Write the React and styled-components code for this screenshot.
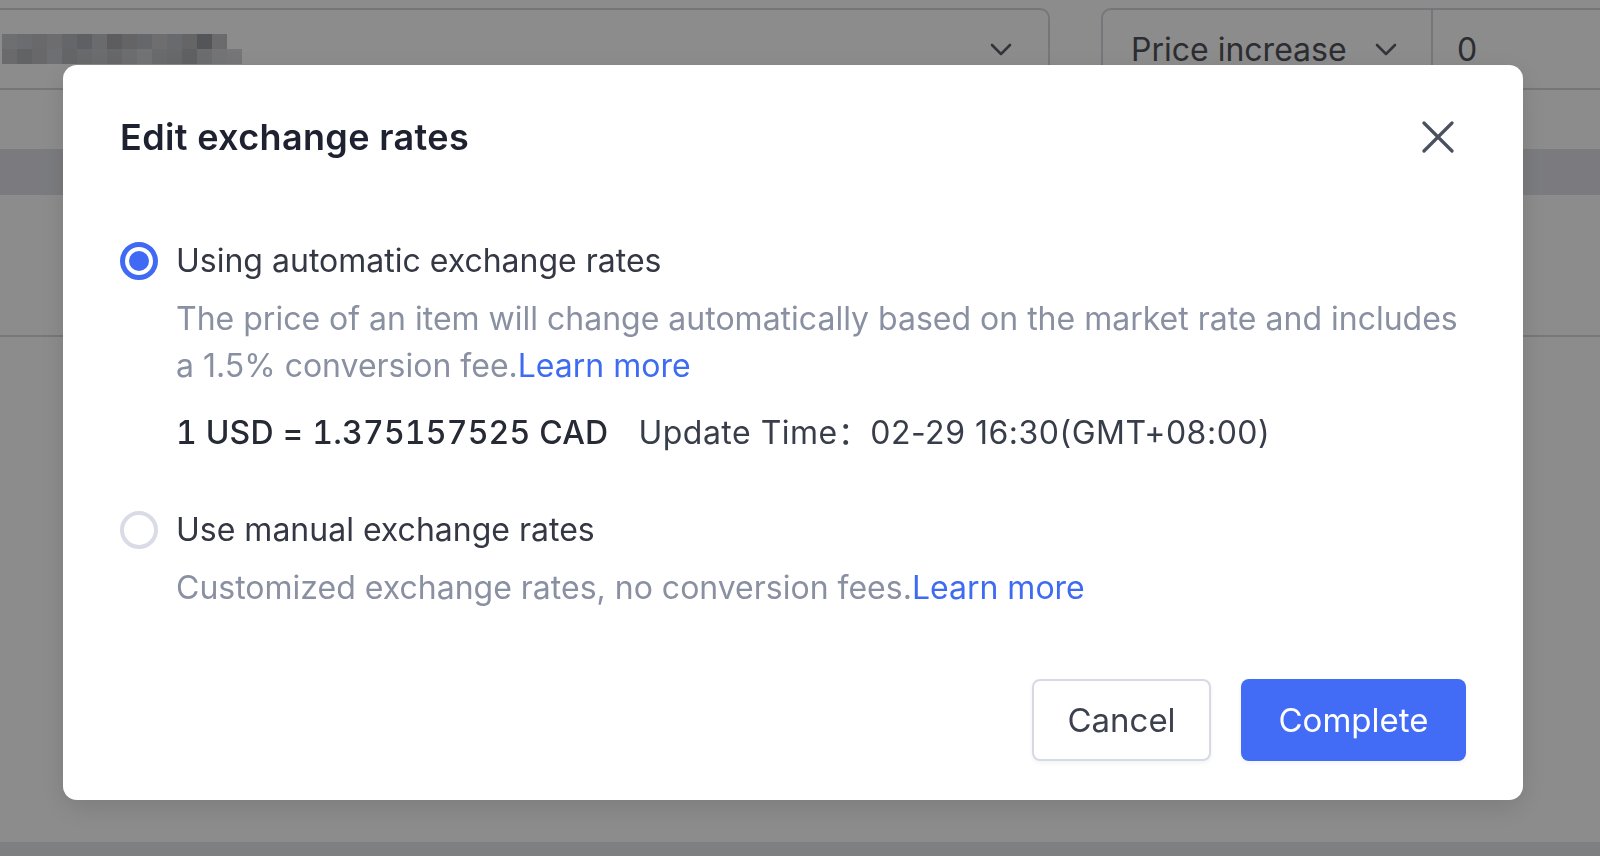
import React from 'react';
import styled, { createGlobalStyle } from 'styled-components';

const GlobalStyle = createGlobalStyle`
  html, body {
    margin: 0;
    padding: 0;
    background: #ffffff;
  }
  body {
    font-family: Inter, "Noto Sans", "Noto Sans CJK SC", sans-serif;
    overflow: hidden;
  }
  * {
    box-sizing: border-box;
  }
`;

// pixelated (censored) shop name behind the overlay
const mosaic = [
  ['#c9cace', '#c4c5ca', '#bfc0c5', '#c6c7cb', '#b9babf', '#aeafb5', '#c2c3c8', '#a9aab0', '#b6b7bc', '#bbbcc1', '#c8c9cd', '#c0c1c6', '#b8b9be', '#9a9ba1', '#c3c4c8', '#ffffff00'],
  ['#c1c2c7', '#b3b4b9', '#bdbec3', '#c9cacf', '#b8b9be', '#c0c1c6', '#c5c6ca', '#bcbdc2', '#c7c8cc', '#d1d2d6', '#c2c3c8', '#bebfc4', '#b0b1b6', '#c6c7cb', '#d3d4d8', '#d6d7db'],
];

function Chevron({ color = '#5d6068' }) {
  return (
    <svg width="22" height="13" viewBox="0 0 22 13" fill="none">
      <path d="M2 2l9 9 9-9" stroke={color} strokeWidth="2.6" strokeLinecap="round" strokeLinejoin="round" />
    </svg>
  );
}

function CloseIcon() {
  return (
    <svg width="32" height="32" viewBox="0 0 32 32" fill="none">
      <path d="M2 2l28 28M30 2L2 30" stroke="#4b505e" strokeWidth="3.2" strokeLinecap="round" />
    </svg>
  );
}

export default function App() {
  return (
    <>
      <GlobalStyle />
      <Page>
        <FilterRow>
          <SelectBox>
            <svg width="240" height="30" viewBox="0 0 240 30">
              {mosaic.map((row, r) =>
                row.map((c, i) => (
                  <rect key={`${r}-${i}`} x={i * 15} y={r * 15} width="15" height="15" fill={c} />
                ))
              )}
            </svg>
            <Chevron />
          </SelectBox>
          <PriceBox>
            <PriceType>
              Price increase
              <Chevron />
            </PriceType>
            <PriceValue>0</PriceValue>
          </PriceBox>
        </FilterRow>
        <TableHead />
        <TableRow />
        <Spacer />
        <Footer />
      </Page>

      <Overlay>
        <Modal>
          <Header>
            <Title>Edit exchange rates</Title>
            <CloseButton aria-label="Close">
              <CloseIcon />
            </CloseButton>
          </Header>

          <Body>
            <Option>
              <Radio checked />
              <Label>Using automatic exchange rates</Label>
              <Description>
                The price of an item will change automatically based on the market rate and includes
                a 1.5% conversion fee.<Link>Learn more</Link>
              </Description>
              <RateLine>
                <strong>1 USD = 1.375157525 CAD</strong>
                <span>Update Time：02-29 16:30(GMT+08:00)</span>
              </RateLine>
            </Option>

            <Option second>
              <Radio />
              <Label>Use manual exchange rates</Label>
              <Description>
                Customized exchange rates, no conversion fees.<Link>Learn more</Link>
              </Description>
            </Option>
          </Body>

          <Actions>
            <Button>Cancel</Button>
            <Button primary>Complete</Button>
          </Actions>
        </Modal>
      </Overlay>
    </>
  );
}

const Page = styled.div`
  width: 1600px;
  height: 856px;
  overflow: hidden;
  padding-top: 8px;
  display: flex;
  flex-direction: column;
  color: #4f525a;
`;

const FilterRow = styled.div`
  display: flex;
  gap: 51px;
  height: 82px;
  margin-left: -20px;
  margin-right: -40px;
`;

const SelectBox = styled.div`
  flex: 0 0 1070px;
  border: 2px solid #d6d8de;
  border-radius: 10px;
  display: flex;
  align-items: center;
  justify-content: space-between;
  padding: 0 36px 0 20px;
`;

const PriceBox = styled.div`
  flex: 1;
  display: flex;
  border: 2px solid #d6d8de;
  border-radius: 10px;
`;

const PriceType = styled.div`
  width: 330px;
  display: flex;
  align-items: center;
  gap: 28px;
  padding-left: 28px;
  border-right: 2px solid #d6d8de;
  font-size: 32px;
`;

const PriceValue = styled.div`
  display: flex;
  align-items: center;
  padding-left: 24px;
  font-size: 32px;
`;

const TableHead = styled.div`
  margin-top: 59px;
  height: 46px;
  background: #e0e1e7;
`;

const TableRow = styled.div`
  height: 142px;
  border-bottom: 2px solid #d8d9de;
`;

const Spacer = styled.div`
  flex: 1;
`;

const Footer = styled.div`
  height: 14px;
  background: #e6e7ec;
`;

const Overlay = styled.div`
  position: fixed;
  inset: 0;
  background: rgba(0, 0, 0, 0.45);
  padding: 65px 0 0 63px;
`;

const Modal = styled.div`
  width: 1460px;
  height: 735px;
  background: #ffffff;
  border-radius: 14px;
  padding: 52px 57px 39px;
  box-shadow: 0 8px 28px rgba(0, 0, 0, 0.12);
  display: flex;
  flex-direction: column;
`;

const Header = styled.div`
  display: flex;
  align-items: center;
  justify-content: space-between;
  height: 40px;
`;

const Title = styled.h2`
  margin: 0;
  font-size: 36px;
  line-height: 40px;
  font-weight: 600;
  letter-spacing: 0.35px;
  color: #1e2230;
`;

const CloseButton = styled.button`
  display: flex;
  padding: 0;
  margin-right: 12px;
  border: none;
  background: none;
  cursor: pointer;
`;

const Body = styled.div`
  margin-top: 82px;
`;

const Option = styled.div`
  display: grid;
  grid-template-columns: 38px 1fr;
  column-gap: 18px;
  align-items: center;
  margin-top: ${props => (props.second ? '53px' : '0')};
`;

const Radio = styled.span`
  width: 38px;
  height: 38px;
  border-radius: 50%;
  border: ${props => (props.checked ? '5px solid #4069f4' : '4px solid #d9dbe7')};
  display: flex;
  align-items: center;
  justify-content: center;

  &::after {
    content: '';
    width: 20px;
    height: 20px;
    border-radius: 50%;
    background: ${props => (props.checked ? '#4069f4' : 'transparent')};
  }
`;

const Label = styled.div`
  font-size: 32px;
  line-height: 44px;
  color: #343844;
`;

const Description = styled.p`
  grid-column: 2;
  margin: 12px 0 0;
  font-size: 32px;
  line-height: 47px;
  color: #8990a2;
`;

const Link = styled.a`
  color: #3f6bf2;
  cursor: pointer;
`;

const RateLine = styled.div`
  grid-column: 2;
  margin-top: 22px;
  font-size: 32px;
  line-height: 44px;
  color: #383d4a;

  strong {
    font-weight: 500;
    font-variant-numeric: tabular-nums;
    letter-spacing: 0.2px;
    color: #262a35;
    margin-right: 30px;
  }

  span {
    letter-spacing: 0.5px;
  }
`;

const Actions = styled.div`
  margin-top: auto;
  display: flex;
  justify-content: flex-end;
  gap: 30px;
`;

const Button = styled.button`
  height: 82px;
  width: ${props => (props.primary ? '225px' : '179px')};
  border-radius: 8px;
  font-family: inherit;
  font-size: 33px;
  border: ${props => (props.primary ? 'none' : '2px solid #d7dae4')};
  background: ${props => (props.primary ? '#426cf6' : '#ffffff')};
  color: ${props => (props.primary ? '#ffffff' : '#3c414e')};
  box-shadow: 0 2px 4px rgba(20, 30, 60, 0.06);
  cursor: pointer;
`;
